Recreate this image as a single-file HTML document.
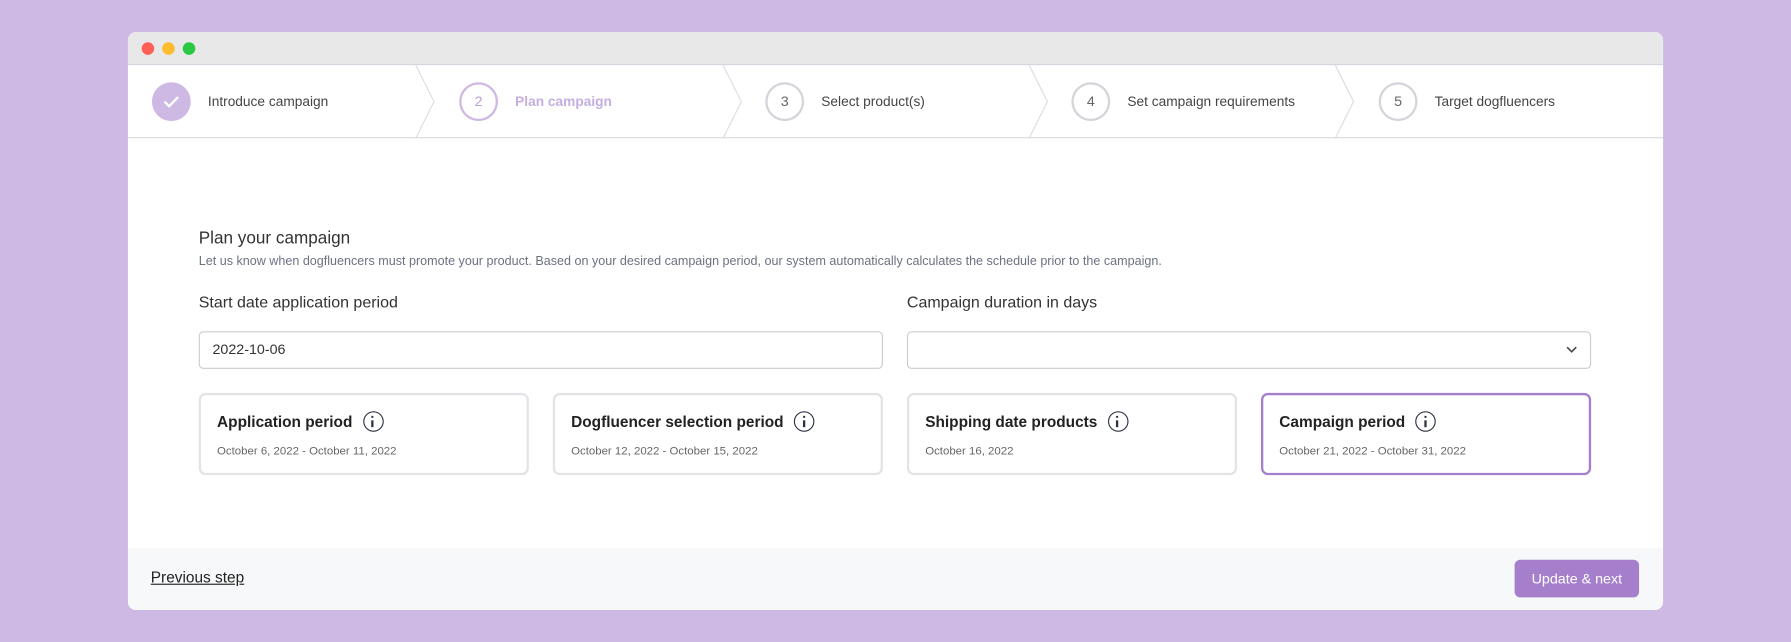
<!DOCTYPE html>
<html><head><style>
*{box-sizing:border-box;margin:0;padding:0}
html,body{width:1791px;height:642px;overflow:hidden;background:#cdb9e3;font-family:"Liberation Sans",sans-serif}
#s{position:absolute;left:0;top:0;width:1568px;height:562px;transform:scale(1.14222);transform-origin:0 0}
.win{position:absolute;left:112px;top:28px;width:1344px;height:506px;background:#fff;border-radius:7px;overflow:hidden}
.bar{height:29px;background:#e8e8e8;border-bottom:1px solid #d6d6dc;position:relative}
.dot{position:absolute;top:9px;width:11px;height:11px;border-radius:50%}
.steps{position:absolute;top:29px;left:0;width:1344px;height:64px;border-bottom:1px solid #d9d9de}
.step{position:absolute;top:0;height:63px;display:flex;align-items:center}
.c{width:34px;height:34px;border-radius:50%;border:2px solid #d4d4da;color:#666;font-size:12.5px;display:flex;align-items:center;justify-content:center;margin-right:15px}
.st{font-size:12px;color:#444}
.abs{position:absolute}
.lbl{font-size:14px;color:#333}
.inp{position:absolute;top:262px;height:33px;border:1px solid #ccc;border-radius:4px;font-size:12.5px;color:#333;padding:8px 11px}
.card{position:absolute;top:316px;width:289px;height:72px;border:2px solid #e3e3e8;border-radius:6px;padding:14px 14px}
.card b{font-size:13.5px;color:#222;display:flex;align-items:center}
.card span{display:block;font-size:10px;color:#666;margin-top:12px}
.i{display:inline-block;width:18px;height:18px;border:1.8px solid #2d3142;border-radius:50%;margin-left:9px;position:relative}
.i:before{content:"";position:absolute;left:6.5px;top:3px;width:2px;height:2px;background:#2d3142;border-radius:1px}
.i:after{content:"";position:absolute;left:6.5px;top:6.5px;width:2px;height:6px;background:#2d3142}
.foot{position:absolute;left:0;top:452px;width:1344px;height:54px;background:#f7f8fa}
</style></head><body><div id="s">
<div class="win">
<div class="bar"><div class="dot" style="left:12px;background:#fe5f57"></div><div class="dot" style="left:30px;background:#febc2e"></div><div class="dot" style="left:48px;background:#28c840"></div></div>
<div class="steps">
<svg class="abs" style="left:0;top:0" width="1344" height="64"><g fill="none" stroke="#dcdce2" stroke-width="1"><path d="M252 0 L268 32 L252 64"/><path d="M521 0 L537 32 L521 64"/><path d="M789 0 L805 32 L789 64"/><path d="M1057 0 L1073 32 L1057 64"/></g></svg>
<div class="step" style="left:21px"><div class="c" style="background:#cdb9e3;border-color:#cdb9e3"><svg width="16" height="14"><path d="M2 7 L6 11 L14 3" fill="none" stroke="#fff" stroke-width="2"/></svg></div><span class="st">Introduce campaign</span></div>
<div class="step" style="left:290px"><div class="c" style="border-color:#cdb9e3;color:#b9a0d8">2</div><span class="st" style="color:#c4aee0;font-weight:bold">Plan campaign</span></div>
<div class="step" style="left:558px"><div class="c">3</div><span class="st">Select product(s)</span></div>
<div class="step" style="left:826px"><div class="c">4</div><span class="st">Set campaign requirements</span></div>
<div class="step" style="left:1095px"><div class="c">5</div><span class="st">Target dogfluencers</span></div>
</div>
<div class="abs" style="left:62px;top:172px;font-size:15px;color:#333">Plan your campaign</div>
<div class="abs" style="left:62px;top:195px;font-size:11px;color:#6b7280">Let us know when dogfluencers must promote your product. Based on your desired campaign period, our system automatically calculates the schedule prior to the campaign.</div>
<div class="abs lbl" style="left:62px;top:228px">Start date application period</div>
<div class="abs lbl" style="left:682px;top:228px">Campaign duration in days</div>
<div class="inp" style="left:62px;width:599px">2022-10-06</div>
<div class="inp" style="left:682px;width:599px"><svg class="abs" style="right:11px;top:12px" width="10" height="7"><path d="M1 1 L5 5 L9 1" fill="none" stroke="#444" stroke-width="1.4"/></svg></div>
<div class="card" style="left:62px"><b>Application period<i class="i"></i></b><span>October 6, 2022 - October 11, 2022</span></div>
<div class="card" style="left:372px"><b>Dogfluencer selection period<i class="i"></i></b><span>October 12, 2022 - October 15, 2022</span></div>
<div class="card" style="left:682px"><b>Shipping date products<i class="i"></i></b><span>October 16, 2022</span></div>
<div class="card" style="left:992px;border-color:#a57fcb"><b>Campaign period<i class="i"></i></b><span>October 21, 2022 - October 31, 2022</span></div>
<div class="foot">
<div class="abs" style="left:20px;top:18px;font-size:13.5px;color:#222;text-decoration:underline">Previous step</div>
<div class="abs" style="left:1214px;top:10px;width:109px;height:33px;background:#a57fcb;border-radius:5px;color:#fff;font-size:12.5px;display:flex;align-items:center;justify-content:center">Update &amp; next</div>
</div>
</div>
</div></body></html>
